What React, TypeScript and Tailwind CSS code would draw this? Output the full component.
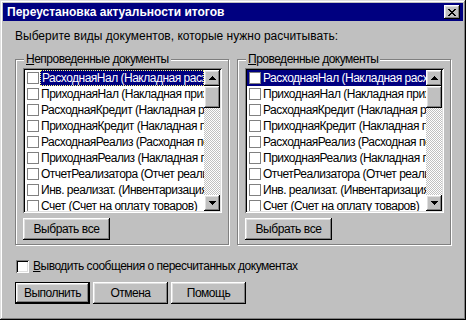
import React from "react";

const rows = [
  "РасходнаяНал (Накладная расходная)",
  "ПриходнаяНал (Накладная приходная)",
  "РасходнаяКредит (Накладная расходная)",
  "ПриходнаяКредит (Накладная приходная)",
  "РасходнаяРеализ (Расходная по реализации)",
  "ПриходнаяРеализ (Накладная приходная)",
  "ОтчетРеализатора (Отчет реализатора)",
  "Инв. реализат. (Инвентаризация)",
  "Счет (Счет на оплату товаров)",
];

const raised =
  "shadow-[inset_-1px_-1px_0_#000,inset_1px_1px_0_#fff,inset_-2px_-2px_0_#808080,inset_2px_2px_0_#dfdfdf]";
const sunken =
  "shadow-[inset_1px_1px_0_#808080,inset_-1px_-1px_0_#fff,inset_2px_2px_0_#000,inset_-2px_-2px_0_#dfdfdf]";

function Arrow({ down }: { down?: boolean }) {
  const widths = [1, 3, 5, 7];
  const ws = down ? [...widths].reverse() : widths;
  return (
    <svg width="7" height="4" shapeRendering="crispEdges">
      {ws.map((w, i) => (
        <rect key={i} x={(7 - w) / 2} y={i} width={w} height={1} fill="#000" />
      ))}
    </svg>
  );
}

function CloseGlyph() {
  const pattern = [
    "XX....XX",
    ".XX..XX.",
    "..XXXX..",
    "...XX...",
    "..XXXX..",
    ".XX..XX.",
    "XX....XX",
  ];
  return (
    <svg width="8" height="7" shapeRendering="crispEdges">
      {pattern.flatMap((r, y) =>
        r.split("").map((c, x) =>
          c === "X" ? <rect key={`${x}-${y}`} x={x} y={y} width={1} height={1} fill="#000" /> : null
        )
      )}
    </svg>
  );
}

function ListBox({ focused }: { focused?: boolean }) {
  return (
    <div className={`w-[199px] h-[145px] bg-white p-[2px] flex ${sunken}`}>
      <div className="flex-1 min-w-0 flex flex-col overflow-hidden tracking-[-0.5px]">
        {rows.map((r, i) => {
          const sel = i === 0;
          if (sel && focused) {
            return (
              <div key={i} className="h-[16px] shrink-0 flex items-center pl-[2px]">
                <div className="w-[12px] h-[12px] border border-[#808080] bg-white shrink-0" />
                <div className="flex-1 h-[16px] ml-[1px] bg-[#000080] text-white border border-dotted border-[#ffff80] flex items-center pl-[1px] whitespace-nowrap overflow-hidden leading-[14px]">
                  {r}
                </div>
              </div>
            );
          }
          return (
            <div
              key={i}
              className={`h-[16px] shrink-0 flex items-center pl-[2px] whitespace-nowrap overflow-hidden ${
                sel ? "bg-[#000080] text-white" : ""
              }`}
            >
              <div className="w-[12px] h-[12px] border border-[#808080] bg-white shrink-0" />
              <span className="ml-[2px] leading-[14px]">{r}</span>
            </div>
          );
        })}
      </div>
      <div className="w-[16px] flex flex-col shrink-0">
        <div className={`w-[16px] h-[16px] bg-[#c0c0c0] flex items-center justify-center ${raised}`}>
          <Arrow />
        </div>
        <div className={`w-[16px] h-[22px] bg-[#c0c0c0] ${raised}`} />
        <div className="flex-1 bg-[image:repeating-conic-gradient(#fff_0_25%,#c0c0c0_0_50%)] bg-[length:2px_2px]" />
        <div className={`w-[16px] h-[16px] bg-[#c0c0c0] flex items-center justify-center ${raised}`}>
          <Arrow down />
        </div>
      </div>
    </div>
  );
}

function Group({ label, rest, focused }: { label: string; rest: string; focused?: boolean }) {
  return (
    <div className="relative border border-[#808080] shadow-[inset_1px_1px_0_#fff,1px_1px_0_#fff] pt-[8px] pl-[7px] pb-[4px]">
      <div className="absolute top-[-8px] left-[8px] px-[2px] bg-[#c0c0c0] leading-[14px] whitespace-nowrap tracking-[-0.5px]">
        <span className="underline">{label}</span>
        {rest}
      </div>
      <ListBox focused={focused} />
      <button
        className={`mt-[5px] w-[87px] h-[22px] bg-[#c0c0c0] flex items-center justify-center tracking-[-0.4px] ${raised}`}
      >
        Выбрать все
      </button>
    </div>
  );
}

function Btn({ children, def }: { children: React.ReactNode; def?: boolean }) {
  return (
    <div className={`w-[75px] h-[22px] ${def ? "border border-black" : ""}`}>
      <button className={`w-full h-full bg-[#c0c0c0] flex items-center justify-center tracking-[-0.5px] ${raised}`}>
        {children}
      </button>
    </div>
  );
}

export default function App() {
  return (
    <div
      className={`w-[466px] h-[320px] bg-[#c0c0c0] text-black text-[12px] font-['Liberation_Sans',Arial,sans-serif] p-[3px] flex flex-col shadow-[inset_-1px_-1px_0_#000,inset_1px_1px_0_#dfdfdf,inset_-2px_-2px_0_#808080,inset_2px_2px_0_#fff]`}
    >
      <div className="h-[18px] bg-[#000080] flex items-center pl-[4px] pr-[3px] shrink-0">
        <div className="flex-1 text-white font-bold text-[12px] leading-[14px] whitespace-nowrap">
          Переустановка актуальности итогов
        </div>
        <div className={`w-[16px] h-[14px] bg-[#c0c0c0] flex items-center justify-center ${raised}`}>
          <CloseGlyph />
        </div>
      </div>
      <div className="px-[12px] pt-[8px] flex flex-col">
        <div className="leading-[14px]">Выберите виды документов, которые нужно расчитывать:</div>
        <div className="mt-[16px] grid grid-cols-2 gap-[8px]">
          <Group label="Н" rest="епроведенные документы" focused />
          <Group label="П" rest="роведенные документы" />
        </div>
        <div className="mt-[14px] flex items-center ml-[1px]">
          <div className={`w-[13px] h-[13px] bg-white ${sunken}`} />
          <div className="ml-[4px] leading-[14px] tracking-[-0.5px]">
            <span className="underline">В</span>ыводить сообщения о пересчитанных документах
          </div>
        </div>
        <div className="mt-[9px] flex gap-[3px]">
          <Btn def>Выполнить</Btn>
          <Btn>Отмена</Btn>
          <Btn>Помощь</Btn>
        </div>
      </div>
    </div>
  );
}
